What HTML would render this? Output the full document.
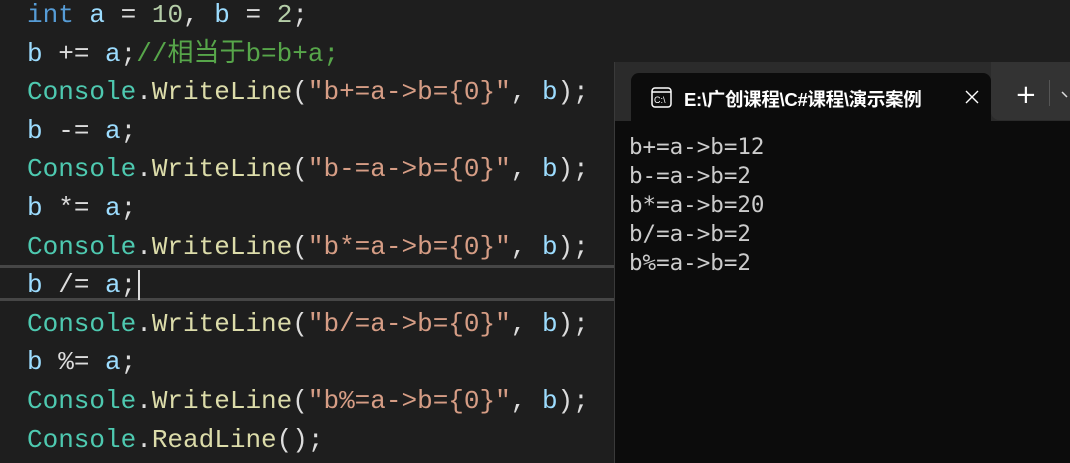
<!DOCTYPE html>
<html><head><meta charset="utf-8"><style>
body{margin:0;width:1070px;height:463px;background:#1e1e1e;overflow:hidden;position:relative;font-family:"Liberation Mono","Noto Sans CJK SC",monospace}
.code{position:absolute;left:27px;top:-4px;font-size:26px;line-height:38.6px;color:#dcdcdc;white-space:pre}
.k{color:#569cd6}.v{color:#9cdcfe}.n{color:#b5cea8}.t{color:#4ec9b0}.m{color:#dcdcaa}.s{color:#d69d85}.c{color:#57a64a}
.hl{position:absolute;left:0;width:614px;height:3px;background:#464646}
.win{position:absolute;left:614px;top:62px;width:456px;height:401px;background:#0c0c0c;border-left:1px solid #3a3a3a}
.bar{position:absolute;left:0;top:0;width:456px;height:59px;background:#2b2b2b}
.tab{position:absolute;left:16px;top:11px;width:360px;height:48px;background:#0c0c0c;border-radius:8px 8px 0 0}
.rt{position:absolute;left:376px;top:0;width:80px;height:58px;background:#333;border-radius:0 0 0 8px}
.out{position:absolute;left:14px;top:71px;font-family:"DejaVu Sans Mono",monospace;font-size:22.5px;line-height:29px;color:#cccccc;white-space:pre}
.ttl{position:absolute;left:53px;top:13px;font-family:"Liberation Sans","Noto Sans CJK SC",sans-serif;font-size:18.5px;font-weight:bold;color:#fff;white-space:nowrap;letter-spacing:-0.3px}
</style></head><body>
<div class="hl" style="top:265px"></div><div class="hl" style="top:298px"></div>
<div class="code"><span class="k">int</span> <span class="v">a</span> = <span class="n">10</span>, <span class="v">b</span> = <span class="n">2</span>;
<span class="v">b</span> += <span class="v">a</span>;<span class="c">//相当于b=b+a;</span>
<span class="t">Console</span>.<span class="m">WriteLine</span>(<span class="s">"b+=a-&gt;b={0}"</span>, <span class="v">b</span>);
<span class="v">b</span> -= <span class="v">a</span>;
<span class="t">Console</span>.<span class="m">WriteLine</span>(<span class="s">"b-=a-&gt;b={0}"</span>, <span class="v">b</span>);
<span class="v">b</span> *= <span class="v">a</span>;
<span class="t">Console</span>.<span class="m">WriteLine</span>(<span class="s">"b*=a-&gt;b={0}"</span>, <span class="v">b</span>);
<span class="v">b</span> /= <span class="v">a</span>;<span style="border-left:2px solid #ddd;margin-left:2px"></span>
<span class="t">Console</span>.<span class="m">WriteLine</span>(<span class="s">"b/=a-&gt;b={0}"</span>, <span class="v">b</span>);
<span class="v">b</span> %= <span class="v">a</span>;
<span class="t">Console</span>.<span class="m">WriteLine</span>(<span class="s">"b%=a-&gt;b={0}"</span>, <span class="v">b</span>);
<span class="t">Console</span>.<span class="m">ReadLine</span>();</div>
<div class="win">
<div class="bar"></div>
<div class="rt"></div>
<div style="position:absolute;left:434px;top:18px;width:1px;height:26px;background:#555"></div>
<div style="position:absolute;left:400px;top:20px;color:#fff;font-size:26px;font-family:'DejaVu Sans',sans-serif;line-height:1">+</div>
<svg style="position:absolute;left:446px;top:28px" width="12" height="10"><path d="M1 2 L6 7" stroke="#ddd" stroke-width="1.5" fill="none"/></svg>
<div class="tab">
<svg style="position:absolute;left:20px;top:14px" width="22" height="22"><rect x="1" y="1" width="19" height="19" rx="3" fill="none" stroke="#fff" stroke-width="1.5"/><line x1="1" y1="5" x2="20" y2="5" stroke="#fff" stroke-width="1.5"/><text x="3" y="16" font-size="9" fill="#fff" font-family="Liberation Sans">C:\</text></svg>
<div class="ttl">E:\广创课程\C#课程\演示案例</div>
<svg style="position:absolute;left:333px;top:16px" width="16" height="16"><path d="M2 2L14 14M14 2L2 14" stroke="#fff" stroke-width="1.4"/></svg>
</div>
<div class="out">b+=a-&gt;b=12
b-=a-&gt;b=2
b*=a-&gt;b=20
b/=a-&gt;b=2
b%=a-&gt;b=2</div>
</div>
</body></html>
